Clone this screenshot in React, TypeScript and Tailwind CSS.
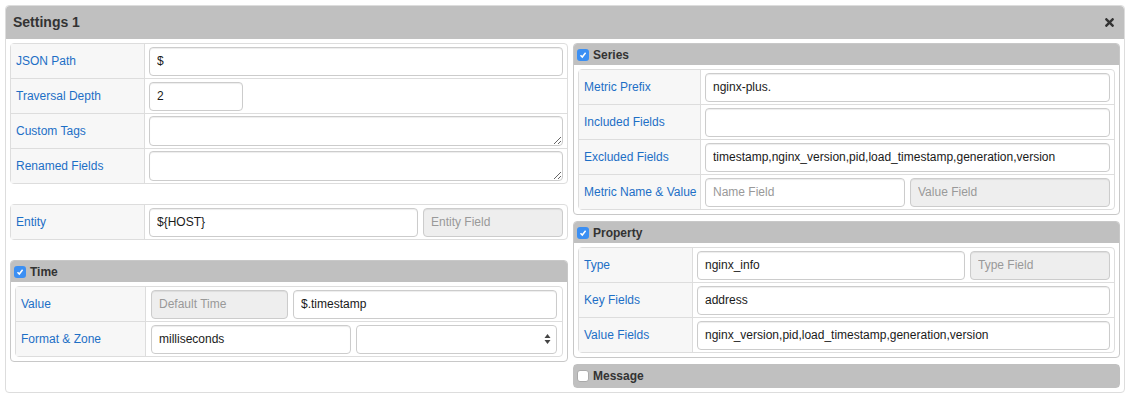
import { FaTimes } from "react-icons/fa";
import type { ReactNode } from "react";

const font = "font-['Liberation_Sans',Arial,Helvetica,sans-serif]";

function Field({
  value,
  placeholder,
  disabled,
  className = "",
}: {
  value?: string;
  placeholder?: string;
  disabled?: boolean;
  className?: string;
}) {
  return (
    <input
      readOnly
      defaultValue={value}
      placeholder={placeholder}
      className={`h-[29px] min-w-0 rounded-[4px] border border-[#ccc] px-[7px] text-[12px] text-[#1a1a1a] outline-none shadow-[inset_0_1px_1px_rgba(0,0,0,0.075)] placeholder:text-[#999] ${
        disabled ? "bg-[#eee]" : "bg-white"
      } ${className}`}
    />
  );
}

function Area() {
  return (
    <textarea
      readOnly
      className="h-[30px] w-full rounded-[4px] border border-[#ccc] bg-white px-[7px] py-[5px] text-[12px] outline-none shadow-[inset_0_1px_1px_rgba(0,0,0,0.075)]"
    />
  );
}

function Row({
  label,
  labelW,
  pad = "px-[4px]",
  children,
}: {
  label: string;
  labelW: string;
  pad?: string;
  children: ReactNode;
}) {
  return (
    <div className="box-content flex h-[34px]">
      <div
        className={`${labelW} flex shrink-0 items-center whitespace-nowrap border-r border-[#ddd] bg-[#f7f7f7] px-[5px] text-[12px] text-[#1d6fc6]`}
      >
        {label}
      </div>
      <div className={`flex flex-1 items-center gap-[5px] ${pad}`}>{children}</div>
    </div>
  );
}

function Table({ children }: { children: ReactNode }) {
  return (
    <div className="divide-y divide-[#ddd] rounded-[4px] border border-[#ddd] bg-white">
      {children}
    </div>
  );
}

function Check({ checked = true }: { checked?: boolean }) {
  if (!checked) {
    return <span className="h-[12px] w-[12px] rounded-[3px] border border-[#aaa] bg-white" />;
  }
  return (
    <span className="flex h-[12px] w-[12px] items-center justify-center rounded-[3px] bg-[#3b8ff3]">
      <svg width="8" height="8" viewBox="0 0 8 8">
        <path d="M1.5 4.2 L3.3 6 L6.6 1.8" fill="none" stroke="white" strokeWidth="1.5" />
      </svg>
    </span>
  );
}

function PanelHead({ title, checked = true, h = "h-[21px]" }: { title: string; checked?: boolean; h?: string }) {
  return (
    <div className={`flex ${h} items-center gap-[4px] bg-[#c0c0c0] px-[3px]`}>
      <Check checked={checked} />
      <span className="text-[12px] font-bold text-[#333]">{title}</span>
    </div>
  );
}

function Panel({ title, children }: { title: string; children: ReactNode }) {
  return (
    <div className="overflow-hidden rounded-[4px] border border-[#c8c8c8] bg-white">
      <PanelHead title={title} />
      <div className="p-[4px]">{children}</div>
    </div>
  );
}

export default function App() {
  return (
    <div className={`${font} bg-white p-[5px]`}>
      <div className="w-[1120px] rounded-[4px] border border-[#ddd]">
        {/* Title bar */}
        <div className="flex h-[33px] items-center justify-between rounded-t-[4px] bg-[#c0c0c0] pl-[7px] pr-[8px]">
          <span className="text-[14px] font-bold text-[#333]">Settings 1</span>
          <FaTimes size={13} className="text-[#333]" />
        </div>

        <div className="flex gap-[5px] px-[4px] pb-[4px] pt-[4px]">
          {/* Left column */}
          <div className="flex w-[558px] flex-col gap-[20px]">
            <Table>
              <Row label="JSON Path" labelW="w-[134px]">
                <Field value="$" className="flex-1" />
              </Row>
              <Row label="Traversal Depth" labelW="w-[134px]">
                <Field value="2" className="w-[94px]" />
              </Row>
              <Row label="Custom Tags" labelW="w-[134px]">
                <Area />
              </Row>
              <Row label="Renamed Fields" labelW="w-[134px]">
                <Area />
              </Row>
            </Table>

            <Table>
              <Row label="Entity" labelW="w-[134px]">
                <Field value="${HOST}" className="flex-1" />
                <Field placeholder="Entity Field" disabled className="w-[140px]" />
              </Row>
            </Table>

            <Panel title="Time">
              <Table>
                <Row label="Value" labelW="w-[130px]" pad="px-[5px]">
                  <Field placeholder="Default Time" disabled className="w-[137px]" />
                  <Field value="$.timestamp" className="flex-1" />
                </Row>
                <Row label="Format & Zone" labelW="w-[130px]" pad="px-[5px]">
                  <Field value="milliseconds" className="w-[200px]" />
                  <div className="flex h-[29px] flex-1 items-center justify-end rounded-[4px] border border-[#ccc] bg-white pr-[5px]">
                    <svg width="7" height="12" viewBox="0 0 7 12">
                      <path d="M3.5 1 L6.5 5 L0.5 5 Z M3.5 11 L6.5 7 L0.5 7 Z" fill="#444" />
                    </svg>
                  </div>
                </Row>
              </Table>
            </Panel>
          </div>

          {/* Right column */}
          <div className="flex flex-1 flex-col gap-[6px]">
            <Panel title="Series">
              <Table>
                <Row label="Metric Prefix" labelW="w-[122px]">
                  <Field value="nginx-plus." className="flex-1" />
                </Row>
                <Row label="Included Fields" labelW="w-[122px]">
                  <Field className="flex-1" />
                </Row>
                <Row label="Excluded Fields" labelW="w-[122px]">
                  <Field
                    value="timestamp,nginx_version,pid,load_timestamp,generation,version"
                    className="flex-1"
                  />
                </Row>
                <Row label="Metric Name & Value" labelW="w-[122px]">
                  <Field placeholder="Name Field" className="flex-1" />
                  <Field placeholder="Value Field" disabled className="flex-1" />
                </Row>
              </Table>
            </Panel>

            <Panel title="Property">
              <Table>
                <Row label="Type" labelW="w-[114px]">
                  <Field value="nginx_info" className="flex-1" />
                  <Field placeholder="Type Field" disabled className="w-[140px]" />
                </Row>
                <Row label="Key Fields" labelW="w-[114px]">
                  <Field value="address" className="flex-1" />
                </Row>
                <Row label="Value Fields" labelW="w-[114px]">
                  <Field value="nginx_version,pid,load_timestamp,generation,version" className="flex-1" />
                </Row>
              </Table>
            </Panel>

            <div className="rounded-[4px] border border-[#c0c0c0]">
              <PanelHead title="Message" checked={false} h="h-[22px]" />
            </div>
          </div>
        </div>
      </div>
    </div>
  );
}
